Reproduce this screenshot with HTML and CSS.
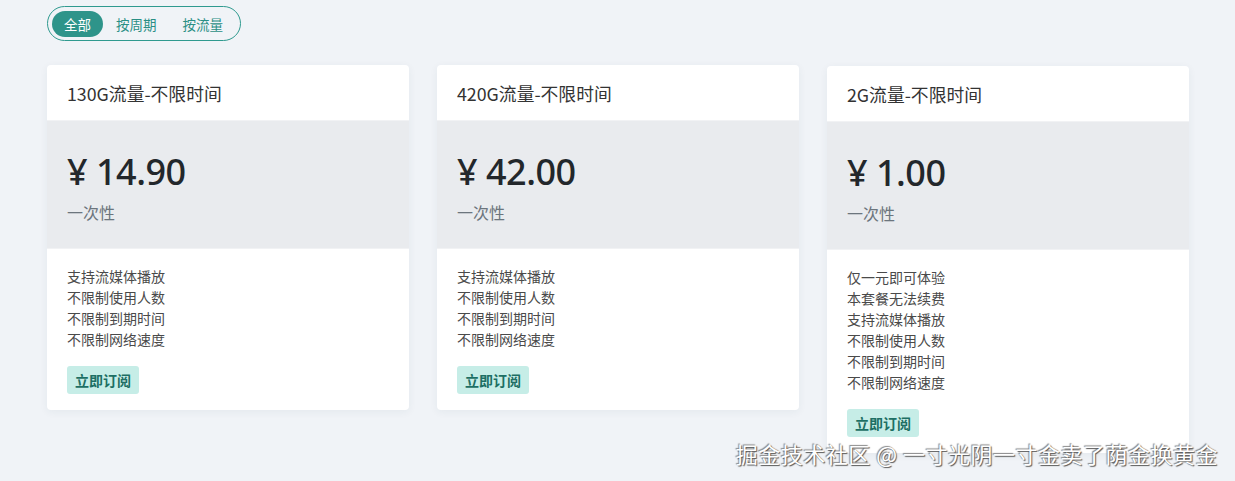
FILE: index.html
```html
<!DOCTYPE html>
<html lang="zh">
<head>
<meta charset="utf-8">
<link rel="stylesheet" href="styles.css">
</head>
<body>
<div class="page">
  <div class="tabs">
    <span class="tab active">全部</span>
    <span class="tab">按周期</span>
    <span class="tab">按流量</span>
  </div>
  <div class="plans">
    <div class="card">
      <div class="card-head">130G流量-不限时间</div>
      <div class="card-price">
        <div class="price">¥ 14.90</div>
        <div class="period">一次性</div>
      </div>
      <div class="card-body">
        <ul class="features">
          <li>支持流媒体播放</li>
          <li>不限制使用人数</li>
          <li>不限制到期时间</li>
          <li>不限制网络速度</li>
        </ul>
        <button class="buy">立即订阅</button>
      </div>
    </div>
    <div class="card">
      <div class="card-head">420G流量-不限时间</div>
      <div class="card-price">
        <div class="price">¥ 42.00</div>
        <div class="period">一次性</div>
      </div>
      <div class="card-body">
        <ul class="features">
          <li>支持流媒体播放</li>
          <li>不限制使用人数</li>
          <li>不限制到期时间</li>
          <li>不限制网络速度</li>
        </ul>
        <button class="buy">立即订阅</button>
      </div>
    </div>
    <div class="card third">
      <div class="card-head">2G流量-不限时间</div>
      <div class="card-price">
        <div class="price">¥ 1.00</div>
        <div class="period">一次性</div>
      </div>
      <div class="card-body">
        <ul class="features">
          <li>仅一元即可体验</li>
          <li>本套餐无法续费</li>
          <li>支持流媒体播放</li>
          <li>不限制使用人数</li>
          <li>不限制到期时间</li>
          <li>不限制网络速度</li>
        </ul>
        <button class="buy">立即订阅</button>
      </div>
    </div>
  </div>
</div>
<div class="watermark">掘金技术社区 @ 一寸光阴一寸金卖了荫金换黄金</div>
</body>
</html>
```

FILE: styles.css
```css
html, body {
  margin: 0;
  padding: 0;
  height: 100%;
  overflow: hidden;
}
body {
  background: #f0f3f7;
  font-family: "Noto Sans", "Noto Sans CJK SC", sans-serif;
  color: #333;
}
.page {
  padding: 6px 0 0 47px;
}
.tabs {
  display: inline-flex;
  align-items: center;
  border: 1px solid #2f9a8f;
  border-radius: 18px;
  padding: 4px;
  height: 25px;
}
.tab {
  font-family: "Noto Sans CJK SC", sans-serif;
  font-size: 13.5px;
  color: #2a8f85;
  padding: 0 13px;
  height: 26px;
  line-height: 26px;
  border-radius: 13px;
}
.tab.active {
  background: #2e948a;
  color: #fff;
  padding: 0 12px;
}
.plans {
  display: grid;
  grid-template-columns: 362px 362px 362px;
  column-gap: 28px;
  align-items: start;
  margin-top: 24px;
}
.card {
  background: #fff;
  border-radius: 4px;
  box-shadow: 0 2px 8px rgba(40, 60, 90, 0.06);
  overflow: hidden;
}
.card.third {
  margin-top: 1px;
}
.card-head {
  height: 55px;
  line-height: 56px;
  padding: 0 20px;
  font-family: "Noto Sans CJK SC", sans-serif;
  font-size: 17.8px;
  color: #333;
  border-bottom: 1px solid #f1f2f4;
}
.card-price {
  background: #e9ebee;
  height: 128px;
  box-sizing: border-box;
  padding: 29px 20px 0;
  border-bottom: 1px solid #f1f2f4;
}
.price {
  font-size: 36px;
  line-height: 44px;
  font-weight: 500;
  color: #23272b;
  letter-spacing: -0.5px;
}
.period {
  margin-top: 6px;
  font-family: "Noto Sans CJK SC", sans-serif;
  font-size: 16px;
  line-height: 24px;
  color: #6c757d;
}
.card-body {
  padding: 17px 20px 16px;
}
.features {
  list-style: none;
  margin: 0;
  padding: 0;
  font-family: "Noto Sans CJK SC", sans-serif;
  font-size: 14px;
  line-height: 21px;
  color: #4a4a4a;
}
.buy {
  display: block;
  margin-top: 16px;
  height: 28px;
  padding: 0 8px;
  border: none;
  border-radius: 3px;
  background: #c6ede7;
  color: #1d6f64;
  font-family: "Noto Sans CJK SC", sans-serif;
  font-size: 14px;
  font-weight: 700;
}
.watermark {
  position: absolute;
  right: 17px;
  bottom: 15px;
  font-family: "Noto Sans CJK SC", sans-serif;
  font-size: 22px;
  line-height: 26px;
  letter-spacing: 0.5px;
  color: #fff;
  text-shadow: 1px 1px 1px #555, -1px -1px 1px #888;
}
```
